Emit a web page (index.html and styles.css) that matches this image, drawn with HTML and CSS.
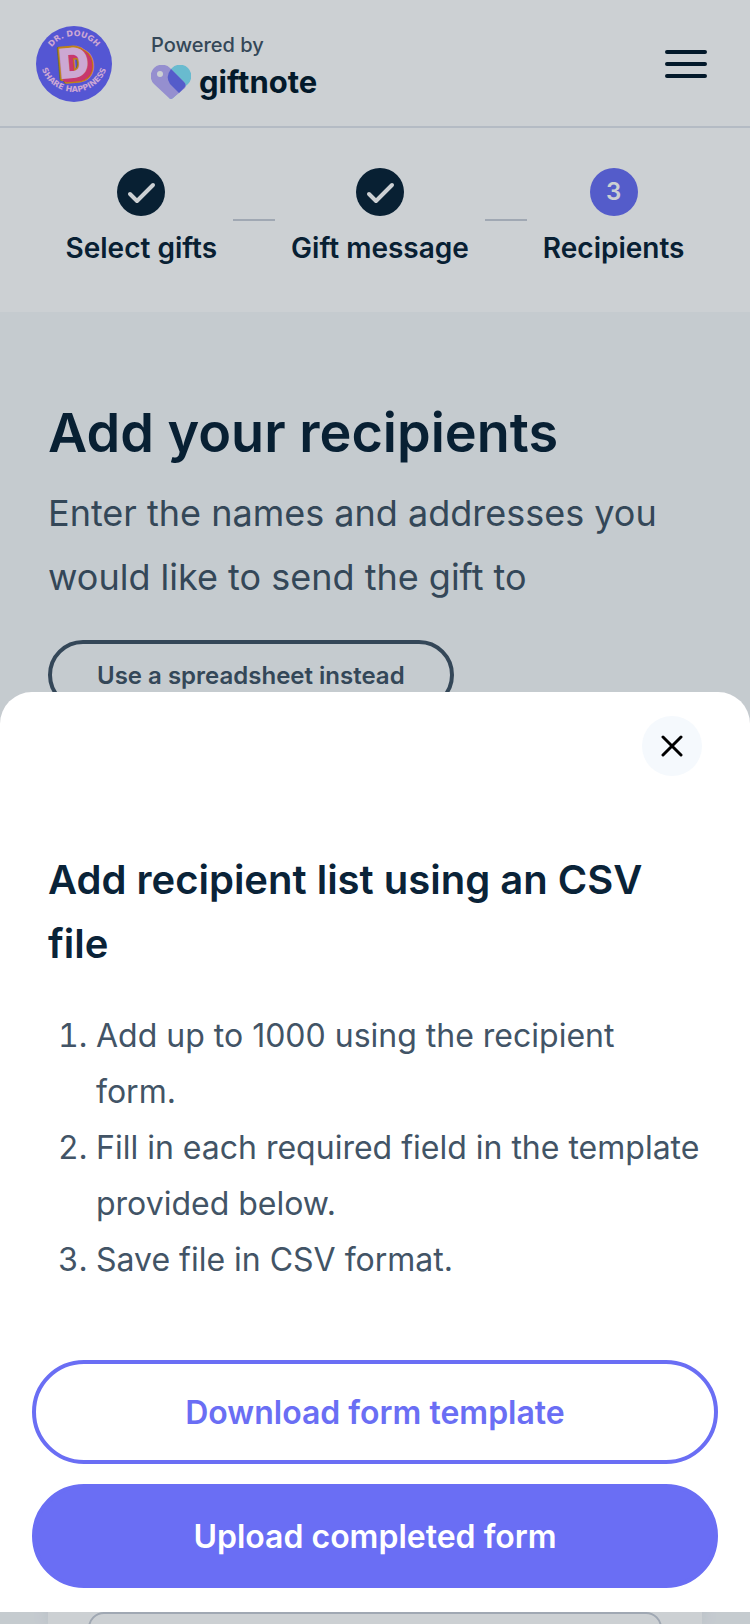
FILE: index.html
```html
<!DOCTYPE html>
<html lang="en">
  <head>
    <meta charset="UTF-8" />
    <meta name="viewport" content="width=device-width, initial-scale=1.0" />
    <title>Add your recipients</title>
    <link rel="stylesheet" href="styles.css">
  </head>
  <body>
    <header class="header">
      <svg class="shop-logo" viewBox="0 0 76 76" role="img" aria-label="Dr. Dough">
        <defs>
          <path id="arc-top" d="M 10 38 A 28 28 0 0 1 66 38" />
          <path id="arc-bottom" d="M 4 32 A 34 34 0 1 0 72 32" />
        </defs>
        <circle cx="38" cy="38" r="38" fill="#6a67ff" />
        <text class="arc-text"><textPath href="#arc-top" startOffset="50%">DR. DOUGH</textPath></text>
        <text class="arc-text"><textPath href="#arc-bottom" startOffset="50%">SHARE HAPPINESS</textPath></text>
        <g class="logo-letter" transform="rotate(-5 38 38)">
          <text x="42" y="55" fill="#ee9e14" stroke="#ee9e14" stroke-width="4">D</text>
          <text x="38" y="52" fill="#ee9e14" stroke="#ee9e14" stroke-width="4">D</text>
          <text x="42" y="55" fill="#fa4080" stroke="#fa4080" stroke-width="1">D</text>
          <text x="40" y="54" fill="#fa4080" stroke="#fa4080" stroke-width="2">D</text>
          <text x="38" y="52" fill="#ffcdff">D</text>
        </g>
      </svg>
      <div class="powered">
        <span class="powered-label">Powered by</span>
        <div class="brand">
          <svg class="heart" viewBox="0 0 40 34" aria-hidden="true">
            <path d="M21 3 A11 11 0 0 1 37 19 L22 33 Q20 35 18 33 L17 15 Q15 8 21 3 Z" fill="#84e5fb" />
            <path d="M3 19 A11 11 0 0 1 19 3 L33 17 Q36 20 34 23 L22 33 Q20 35 18 33 Z" fill="#bbaefb" />
            <path d="M20 4 L33 17 Q36 20 33 23 L28 28 L19 19 Q14 12 20 4 Z" fill="#6a6ef4" />
            <circle cx="9" cy="9" r="3" fill="#ffffff" />
          </svg>
          <span class="brand-name">giftnote</span>
        </div>
      </div>
      <button class="menu-button" aria-label="Menu">
        <svg viewBox="0 0 42 28" aria-hidden="true">
          <path d="M2 2h38M2 14h38M2 26h38" />
        </svg>
      </button>
    </header>

    <nav class="steps" aria-label="Progress">
      <div class="step">
        <svg class="step-circle" viewBox="0 0 48 48" aria-hidden="true">
          <path d="M13 26l7 7L36 17" />
        </svg>
        <span>Select gifts</span>
      </div>
      <div class="step-line"></div>
      <div class="step">
        <svg class="step-circle" viewBox="0 0 48 48" aria-hidden="true">
          <path d="M13 26l7 7L36 17" />
        </svg>
        <span>Gift message</span>
      </div>
      <div class="step-line"></div>
      <div class="step">
        <div class="step-circle current">3</div>
        <span>Recipients</span>
      </div>
    </nav>

    <main class="content">
      <h1>Add your recipients</h1>
      <p>Enter the names and addresses you would like to send the gift to</p>
      <button class="spreadsheet-button">Use a spreadsheet instead</button>
      <form class="card">
        <div class="field">
          <input type="text" aria-label="Recipient" />
        </div>
      </form>
    </main>

    <div class="overlay">
      <section class="modal" role="dialog" aria-modal="true" aria-labelledby="modal-title">
        <button class="close-button" aria-label="Close">
          <svg viewBox="0 0 22 22" aria-hidden="true">
            <path d="M2 2l18 18M20 2L2 20" />
          </svg>
        </button>
        <h2 id="modal-title">Add recipient list using an CSV file</h2>
        <ol class="instructions">
          <li>Add up to 1000 using the recipient form.</li>
          <li>Fill in each required field in the template provided below.</li>
          <li>Save file in CSV format.</li>
        </ol>
        <div class="actions">
          <button class="action outline">Download form template</button>
          <button class="action filled">Upload completed form</button>
        </div>
      </section>
    </div>
  </body>
</html>
```

FILE: styles.css
```css
* {
  box-sizing: border-box;
}
body {
  display: flex;
  flex-direction: column;
  height: 100vh;
  margin: 0;
  overflow: hidden;
  background-color: #f7f9fb;
  font-family: Inter, "Liberation Sans", sans-serif;
  color: #0a2338;
}
button {
  padding: 0;
  border: none;
  background: none;
  font-family: inherit;
  color: inherit;
  cursor: pointer;
}
h1,
h2,
p,
ol {
  margin: 0;
}

/* header */
.header {
  display: flex;
  align-items: center;
  height: 128px;
  padding: 2px 43px 0 36px;
  border-bottom: 2px solid #e1e5ed;
  background-color: #fff;
}
.shop-logo {
  width: 76px;
  height: 76px;
}
.arc-text {
  font-family: "DejaVu Sans", sans-serif;
  font-size: 8px;
  font-weight: 700;
  text-anchor: middle;
  fill: #ffcdff;
}
.logo-letter {
  font-size: 42px;
  font-weight: 900;
  text-anchor: middle;
  stroke-linejoin: round;
}
.powered {
  display: flex;
  flex-direction: column;
  gap: 4px;
  margin-left: 39px;
}
.powered-label {
  font-size: 20px;
  font-weight: 500;
  line-height: 32px;
  color: #425466;
}
.brand {
  display: flex;
  align-items: center;
  gap: 8px;
}
.heart {
  width: 40px;
  height: 34px;
}
.brand-name {
  font-size: 31px;
  font-weight: 700;
  line-height: 34px;
  color: #041b2c;
}
.menu-button {
  width: 42px;
  height: 28px;
  margin-left: auto;
}
.menu-button svg {
  display: block;
  fill: none;
  stroke: #041b2c;
  stroke-width: 4;
  stroke-linecap: round;
}

/* steps */
.steps {
  display: flex;
  justify-content: center;
  align-items: center;
  gap: 16px;
  padding: 40px 0;
  background-color: #fff;
}
.step {
  display: flex;
  flex-direction: column;
  align-items: center;
  gap: 8px;
  font-size: 28px;
  font-weight: 600;
  line-height: 48px;
}
.step-circle {
  width: 48px;
  height: 48px;
  border-radius: 50%;
  background-color: #0a2338;
  fill: none;
  stroke: #fff;
  stroke-width: 4;
  stroke-linecap: round;
  stroke-linejoin: round;
}
.current {
  background-color: #6a6ef4;
  font-size: 24px;
  text-align: center;
  color: #fff;
}
.step-line {
  width: 42px;
  height: 2px;
  background-color: #c8cdd7;
}

/* page content */
.content {
  display: flex;
  flex: 1;
  flex-direction: column;
  padding: 81px 48px 0;
}
h1 {
  margin-bottom: 8px;
  font-size: 54px;
  font-weight: 600;
  line-height: 80px;
}
p {
  margin-bottom: 31px;
  font-size: 36px;
  line-height: 64px;
  color: #425466;
}
.spreadsheet-button {
  align-self: flex-start;
  height: 70px;
  padding: 0 45px;
  border: 4px solid #425466;
  border-radius: 36px;
  font-size: 24px;
  font-weight: 600;
  color: #425466;
}
.card {
  display: flex;
  flex: 1;
  flex-direction: column;
  justify-content: flex-end;
  margin-top: 48px;
  padding: 0 40px;
  background-color: #fff;
  box-shadow: 0 0 16px rgba(66, 84, 130, 0.1);
}
.field {
  height: 12px;
  overflow: hidden;
}
.field input {
  width: 100%;
  height: 96px;
  border: 2px solid #c8cdd7;
  border-radius: 16px;
  background-color: #fff;
}

/* modal */
.overlay {
  position: fixed;
  inset: 0;
  display: flex;
  flex-direction: column;
  justify-content: flex-end;
  padding-bottom: 12px;
  background-color: rgba(0, 20, 36, 0.2);
}
.modal {
  display: flex;
  flex-direction: column;
  padding: 24px 32px;
  border-radius: 32px 32px 0 0;
  background-color: #fff;
}
.close-button {
  display: flex;
  justify-content: center;
  align-items: center;
  align-self: flex-end;
  width: 60px;
  height: 60px;
  margin-right: 16px;
  border-radius: 50%;
  background-color: #f5f9fd;
}
.close-button svg {
  width: 22px;
  height: 22px;
  fill: none;
  stroke: #000;
  stroke-width: 3;
  stroke-linecap: round;
}
h2 {
  margin: 72px 16px 32px;
  font-size: 40px;
  font-weight: 600;
  line-height: 64px;
}
.instructions {
  margin-bottom: 72px;
  padding: 0 16px 0 64px;
  font-size: 32px;
  line-height: 56px;
  color: #425466;
}
.actions {
  display: flex;
  flex-direction: column;
  gap: 20px;
}
.action {
  height: 104px;
  border: 4px solid #6a6ef4;
  border-radius: 52px;
  font-size: 32px;
  font-weight: 600;
}
.outline {
  color: #6a6ef4;
}
.filled {
  background-color: #6a6ef4;
  color: #fff;
}
```
